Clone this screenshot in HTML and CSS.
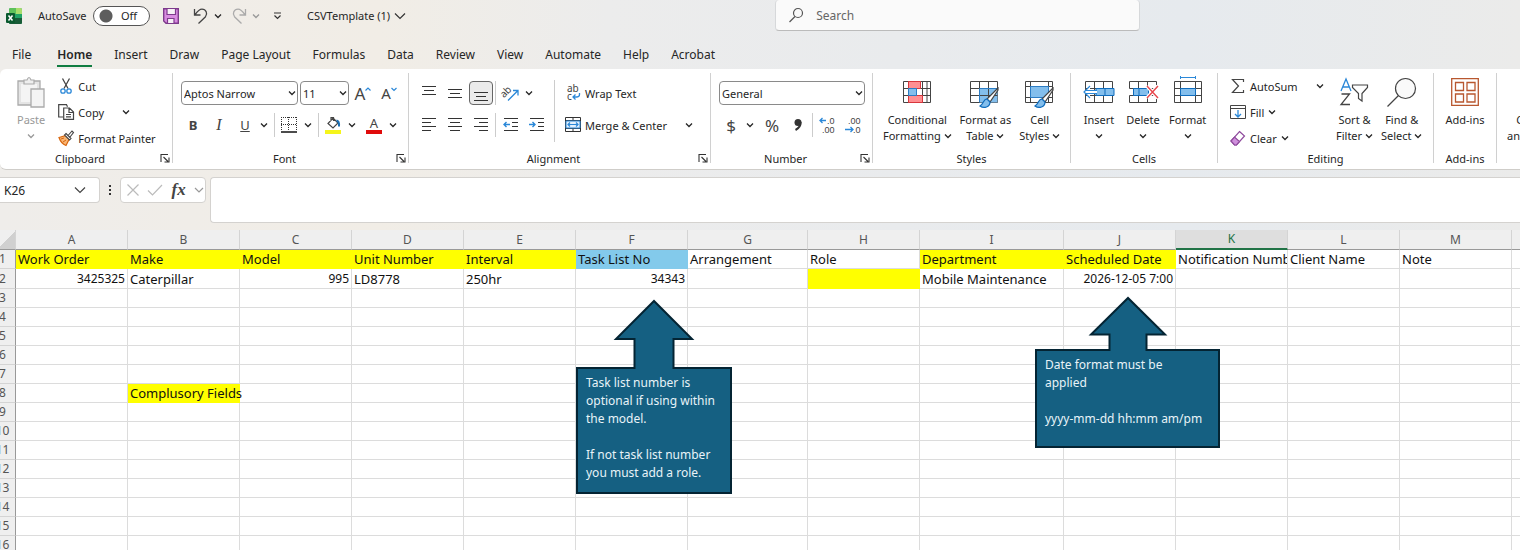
FILE: index.html
```
<!DOCTYPE html>
<html lang="en">
<head>
    <meta charset="UTF-8">
    <meta name="viewport" content="width=device-width, initial-scale=1.0">
    <title>CSVTemplate (1)</title>
    <link rel="stylesheet" href="styles.css">
</head>
<body>
    <svg class="defs" aria-hidden="true">
        <symbol id="chev" viewBox="0 0 8 8"><path d="M1 2.5l3 3 3-3" fill="none" stroke="currentColor" stroke-width="1.3"/></symbol>
        <symbol id="launch" viewBox="0 0 10 10"><path d="M1 9V1.500h7M3.500 4l4.500 4.500M9 4.500v4.500H4.500" fill="none" stroke="#333" stroke-width="1.100"/></symbol>
        <symbol id="brush" viewBox="0 0 20 22"><path d="M19 1L8 12l3 3L19 3z" fill="#fff" stroke="#444" stroke-width="1.200"/><path d="M8 12c-4 0-3 5-7 7 4 3 10 1 10-4z" fill="#83beec" stroke="#0f6cbd" stroke-width="1.200"/></symbol>
    </svg>

    <header class="titlebar">
        <div class="quick">
            <svg class="logo" viewBox="0 0 16 16"><rect x="3" width="13" height="16" rx="1.500" fill="#21a366"/><path d="M3 1.500Q3 0 4.500 0H10v6H3z" fill="#5dc15a"/><path d="M10 0h4.500Q16 0 16 1.500V6h-6z" fill="#a8dd6b"/><path d="M3 10h13v4.500q0 1.500-1.500 1.500h-10Q3 16 3 14.500z" fill="#185c37"/><rect y="5" width="9" height="10" rx="1" fill="#0b5a2f"/><path d="M2.500 7.500l4 5m0-5l-4 5" stroke="#fff" stroke-width="1.500"/></svg>
            <label class="autosave" for="autosave">AutoSave</label>
            <span class="switch"><input type="checkbox" id="autosave"><span>Off</span></span>
            <button class="save" aria-label="Save"><svg width="16" height="16" viewBox="0 0 16 16"><path d="M.700.700h14.600v14.600H3L.700 13z" fill="#d88be0" stroke="#7d3a8c" stroke-width="1.400"/><path d="M4 1v5.500h8.500V1M4.500 15v-4.500H11V15" fill="#f6f0f6" stroke="#7d3a8c" stroke-width="1.200"/></svg></button>
            <button class="undo" aria-label="Undo"><svg width="16" height="18" viewBox="0 0 16 18"><path d="M1.500 2v6h6M1.800 8C4 5 6 2.200 9 2.200c4 0 6 4.500 3.500 7.500L5.500 16.500" fill="none" stroke="#444" stroke-width="1.300"/></svg></button>
            <button class="drop" aria-label="Undo list"><svg><use href="#chev"/></svg></button>
            <button class="redo" aria-label="Redo"><svg width="16" height="18" viewBox="0 0 16 18"><path d="M14.500 2v6h-6M14.200 8C12 5 10 2.200 7 2.200c-4 0-6 4.500-3.500 7.500l7 6.800" fill="none" stroke="#aaa" stroke-width="1.300"/></svg></button>
            <button class="drop faded" aria-label="Redo list"><svg><use href="#chev"/></svg></button>
            <button class="customize" aria-label="Customize toolbar"><svg width="9" height="8" viewBox="0 0 9 8"><path d="M1 1h7M1.500 3.500l3 3 3-3" fill="none" stroke="#333" stroke-width="1.200"/></svg></button>
            <button class="filename">CSVTemplate (1) <svg width="12" height="8" viewBox="0 0 12 8"><path d="M1 1.500l5 5 5-5" fill="none" stroke="#333" stroke-width="1.200"/></svg></button>
        </div>
        <div class="search">
            <svg width="16" height="16" viewBox="0 0 16 16"><circle cx="10" cy="6" r="4.500" fill="none" stroke="#555" stroke-width="1.200"/><path d="M7 9.500L1.500 15" stroke="#555" stroke-width="1.200"/></svg>
            <input type="search" placeholder="Search" aria-label="Search">
        </div>
    </header>

    <nav class="tabs">
        <a href="#">File</a>
        <a href="#" class="active">Home</a>
        <a href="#">Insert</a>
        <a href="#">Draw</a>
        <a href="#">Page Layout</a>
        <a href="#">Formulas</a>
        <a href="#">Data</a>
        <a href="#">Review</a>
        <a href="#">View</a>
        <a href="#">Automate</a>
        <a href="#">Help</a>
        <a href="#">Acrobat</a>
    </nav>

    <div class="ribbon">
        <section class="group clipboard">
            <div class="body">
                <button class="big faded"><svg width="28" height="32" viewBox="0 0 28 32"><path d="M1 5h22v24H1z" fill="#e4e4e4" stroke="#aaa" stroke-width="1.300"/><path d="M4 8h16v18H4z" fill="#f4f4f4"/><path d="M7 8V4h3q2-5 4 0h3v4z" fill="#eee" stroke="#aaa" stroke-width="1.200"/><path d="M14 13h13v18H14z" fill="#f4f4f4" stroke="#aaa" stroke-width="1.300"/></svg><span>Paste</span><svg class="chev"><use href="#chev"/></svg></button>
                <div class="list">
                    <button><svg width="16" height="16" viewBox="0 0 16 16"><path d="M4.500 0.500l5.500 10M11.500 0.500L6 10.500" stroke="#444" stroke-width="1.300"/><circle cx="5" cy="13" r="2.200" fill="none" stroke="#2b88d8" stroke-width="1.300"/><circle cx="11" cy="13" r="2.200" fill="none" stroke="#2b88d8" stroke-width="1.300"/></svg>Cut</button>
                    <button><svg width="16" height="16" viewBox="0 0 16 16"><path d="M5 13H.700V.700h7.800l1 2M5.700 4h5.800l4 4v7.300H5.700zM11 4v4.500h4.500M8 10.500h5M8 12.800h5" fill="none" stroke="#444" stroke-width="1.200"/></svg>Copy<svg class="chev far"><use href="#chev"/></svg></button>
                    <button><svg width="16" height="16" viewBox="0 0 16 16"><path d="M1 7.500l7-2 3 4-3 6q-5-2-7-8z" fill="#f9b573" stroke="#d8660e" stroke-width="1.200"/><path d="M3 9l3-1M5 12l3-2" stroke="#d8660e"/><path d="M8 3.500l5 5-1.500 1.500-5-5zM10.500 5l3.500-4 1.500 1.500L12 7" fill="#fff" stroke="#444" stroke-width="1.100"/></svg>Format Painter</button>
                </div>
            </div>
            <footer><span>Clipboard</span><button class="launch" aria-label="Clipboard settings"><svg><use href="#launch"/></svg></button></footer>
        </section>

        <section class="group font">
            <div class="body rows">
                <div class="row">
                    <span class="select name"><select aria-label="Font"><option>Aptos Narrow</option></select><svg class="chev"><use href="#chev"/></svg></span>
                    <span class="select size"><select aria-label="Font size"><option>11</option></select><svg class="chev"><use href="#chev"/></svg></span>
                    <button class="tool grow" aria-label="Increase font size">A<svg width="6" height="12" viewBox="0 0 6 12"><path d="M.500 3.500L3 1l2.500 2.500" fill="none" stroke="#2b88d8" stroke-width="1.200"/></svg></button>
                    <button class="tool shrink" aria-label="Decrease font size">A<svg width="6" height="12" viewBox="0 0 6 12"><path d="M.500 1L3 3.500 5.500 1" fill="none" stroke="#2b88d8" stroke-width="1.200"/></svg></button>
                </div>
                <div class="row">
                    <button class="tool"><b>B</b></button>
                    <button class="tool italic">I</button>
                    <button class="tool"><u>U</u></button>
                    <button class="drop" aria-label="Underline style"><svg><use href="#chev"/></svg></button>
                    <i class="sep"></i>
                    <button class="tool" aria-label="Borders"><svg width="16" height="16" viewBox="0 0 16 16"><path d="M0 .500h16M0 7.500h16M.500 0v14M7.500 0v14M15.500 0v14" stroke="#333" stroke-dasharray="1 1"/><path d="M0 15h16" stroke="#111" stroke-width="1.500"/></svg></button>
                    <button class="drop" aria-label="Border list"><svg><use href="#chev"/></svg></button>
                    <i class="sep"></i>
                    <button class="tool" aria-label="Fill color"><svg width="16" height="18" viewBox="0 0 16 18"><path d="M8 2l5 5-5 5-5-4.500zM6 5V1.500h2.500V5" fill="#fff" stroke="#444" stroke-width="1.200"/><path d="M11.500 4.500q3 .500 2.500 6" fill="none" stroke="#1b6fb5" stroke-width="2"/><path d="M0 14h16v4H0z" fill="#f5f51b"/></svg></button>
                    <button class="drop" aria-label="Fill colors"><svg><use href="#chev"/></svg></button>
                    <button class="tool color" aria-label="Font color"><span>A</span></button>
                    <button class="drop" aria-label="Font colors"><svg><use href="#chev"/></svg></button>
                </div>
            </div>
            <footer><span>Font</span><button class="launch" aria-label="Font settings"><svg><use href="#launch"/></svg></button></footer>
        </section>

        <section class="group alignment">
            <div class="body">
                <div class="rows">
                    <div class="row">
                        <button class="tool" aria-label="Top align"><svg width="14" height="16" viewBox="0 0 14 16"><path d="M0 1.500h14M2 5.500h10M0 9.500h14" stroke="#333"/></svg></button>
                        <button class="tool" aria-label="Middle align"><svg width="14" height="16" viewBox="0 0 14 16"><path d="M0 4.500h14M2 8.500h10M0 12.500h14" stroke="#333"/></svg></button>
                        <button class="tool pressed" aria-label="Bottom align"><svg width="14" height="16" viewBox="0 0 14 16"><path d="M0 7.500h14M2 11.500h10M0 15.500h14" stroke="#333"/></svg></button>
                        <i class="sep"></i>
                        <button class="tool" aria-label="Orientation"><svg width="18" height="18" viewBox="0 0 18 18"><text x="-1" y="11" transform="rotate(-45 5 8)" class="ab">ab</text><path d="M7 16.500L17 6.500M12 6.500h5v5" fill="none" stroke="#2b88d8" stroke-width="1.300"/></svg></button>
                        <button class="drop" aria-label="Orientation list"><svg><use href="#chev"/></svg></button>
                    </div>
                    <div class="row">
                        <button class="tool" aria-label="Align left"><svg width="14" height="14" viewBox="0 0 14 14"><path d="M0 .500h14M0 4.500h9M0 8.500h14M0 12.500h9" stroke="#333"/></svg></button>
                        <button class="tool" aria-label="Center"><svg width="14" height="14" viewBox="0 0 14 14"><path d="M0 .500h14M2 4.500h10M0 8.500h14M2 12.500h10" stroke="#333"/></svg></button>
                        <button class="tool" aria-label="Align right"><svg width="14" height="14" viewBox="0 0 14 14"><path d="M0 .500h14M5 4.500h9M0 8.500h14M5 12.500h9" stroke="#333"/></svg></button>
                        <i class="sep"></i>
                        <button class="tool" aria-label="Decrease indent"><svg width="15" height="14" viewBox="0 0 15 14"><path d="M1 .500h14M9 4.500h6M9 8.500h6M1 12.500h14" stroke="#333"/><path d="M7 6.500H1M3.500 4L1 6.500 3.500 9" fill="none" stroke="#2b88d8" stroke-width="1.400"/></svg></button>
                        <button class="tool" aria-label="Increase indent"><svg width="15" height="14" viewBox="0 0 15 14"><path d="M1 .500h14M9 4.500h6M9 8.500h6M1 12.500h14" stroke="#333"/><path d="M0 6.500h6M3.500 4L6 6.500 3.500 9" fill="none" stroke="#2b88d8" stroke-width="1.400"/></svg></button>
                    </div>
                </div>
                <div class="rows wrap">
                    <button class="row"><svg width="16" height="16" viewBox="0 0 16 16"><text x="2" y="7" class="ab">ab</text><text x="2" y="15" class="ab">c</text><path d="M14.500 8v1.500q0 2.500-3 2.500H8M10.500 9.500L8 12l2.500 2.500" fill="none" stroke="#2b88d8" stroke-width="1.300"/></svg>Wrap Text</button>
                    <button class="row"><svg width="16" height="16" viewBox="0 0 16 16"><path d="M.500.500h15v14H.500zM.500 3.500h15M.500 11.500h15M8 .500v3M8 11.500v3" fill="#fff" stroke="#333"/><path d="M1 4h14v7H1z" fill="#e3f0fb" stroke="#2b88d8"/><path d="M3 7.500h10M5 5.500l-2 2 2 2M11 5.500l2 2-2 2" fill="none" stroke="#2b88d8" stroke-width="1.200"/></svg>Merge &amp; Center<svg class="chev far"><use href="#chev"/></svg></button>
                </div>
            </div>
            <footer><span>Alignment</span><button class="launch" aria-label="Alignment settings"><svg><use href="#launch"/></svg></button></footer>
        </section>

        <section class="group number">
            <div class="body rows">
                <div class="row">
                    <span class="select format"><select aria-label="Number format"><option>General</option></select><svg class="chev"><use href="#chev"/></svg></span>
                </div>
                <div class="row">
                    <button class="tool sign">$</button>
                    <button class="drop" aria-label="Currency list"><svg><use href="#chev"/></svg></button>
                    <button class="tool sign">%</button>
                    <button class="tool" aria-label="Comma style"><svg width="8" height="14" viewBox="0 0 8 14"><circle cx="4" cy="4.500" r="3.500" fill="#333"/><path d="M6.500 4q.500 5-5 8" fill="none" stroke="#333" stroke-width="2"/></svg></button>
                    <i class="sep"></i>
                    <button class="tool" aria-label="Increase decimal"><svg width="16" height="18" viewBox="0 0 16 18"><text x="8" y="8" class="dec">.0</text><text x="3" y="17" class="dec">.00</text><path d="M7 4.500H1M3.500 2L1 4.500 3.500 7" fill="none" stroke="#2b88d8" stroke-width="1.300"/></svg></button>
                    <button class="tool" aria-label="Decrease decimal"><svg width="16" height="18" viewBox="0 0 16 18"><text x="3" y="8" class="dec">.00</text><text x="8" y="17" class="dec">.0</text><path d="M0 13.500h8M5.500 11L8 13.500 5.500 16" fill="none" stroke="#2b88d8" stroke-width="1.300"/></svg></button>
                </div>
            </div>
            <footer><span>Number</span><button class="launch" aria-label="Number settings"><svg><use href="#launch"/></svg></button></footer>
        </section>

        <section class="group styles">
            <div class="body">
                <button class="big"><svg width="28" height="32" viewBox="0 0 28 32"><path d="M.500 5.500h27v21H.500zM.500 12.500h27M.500 19.500h27M5.500 5.500v21M19.500 5.500v21M24 5.500v21" fill="#fff" stroke="#444"/><path d="M5.500 5.500h12v7h-12zM5.500 19.500h14v7h-14z" fill="#ff8f92" stroke="#d8363c"/><path d="M5.500 12.500h8v7h-8z" fill="#83beec" stroke="#2b7cc4"/></svg><span>Conditional<br>Formatting <svg class="chev"><use href="#chev"/></svg></span></button>
                <button class="big"><svg width="32" height="32" viewBox="0 0 32 32"><path d="M1.500 5.500h27v21h-27z" fill="#fff" stroke="#444"/><path d="M10.500 12.500h18v14h-18z" fill="#83beec"/><path d="M1.500 12.500h27M1.500 19.500h27M10.500 5.500v21M19.500 5.500v21" stroke="#444"/><path d="M10.500 26.500v-14h18" fill="none" stroke="#2b7cc4"/><use href="#brush" x="9" y="11" width="22" height="22"/></svg><span>Format as<br>Table <svg class="chev"><use href="#chev"/></svg></span></button>
                <button class="big"><svg width="32" height="32" viewBox="0 0 32 32"><path d="M1.500 5.500h27v21h-27zM1.500 10.500h27M1.500 21.500h27M6.500 5.500v21M24.500 5.500v21" fill="#fff" stroke="#444"/><path d="M6.500 10.500h18v11h-18z" fill="#83beec" stroke="#2b7cc4"/><use href="#brush" x="9" y="11" width="22" height="22"/></svg><span>Cell<br>Styles <svg class="chev"><use href="#chev"/></svg></span></button>
            </div>
            <footer><span>Styles</span></footer>
        </section>

        <section class="group cells">
            <div class="body">
                <button class="big"><svg width="32" height="32" viewBox="0 0 32 32"><path d="M2.500 5.500h27v21h-27zM11.500 5.500v21M20.500 5.500v21M2.500 12.500h27M2.500 19.500h27" fill="#fff" stroke="#444"/><path d="M13 12.500h18v7H13z" fill="#83beec" stroke="#0f6cbd"/><path d="M22 12.500v7" stroke="#0f6cbd"/><path d="M7 9.500l-6 6.500 6 6.500v-4.500h7v-4H7z" fill="#fff"/><path d="M7 10l-6 6 6 6M2 14.500h12M2 17.500h12" fill="none" stroke="#2b88d8" stroke-width="1.200"/></svg><span>Insert</span><svg class="chev"><use href="#chev"/></svg></button>
                <button class="big"><svg width="32" height="32" viewBox="0 0 32 32"><path d="M2.500 5.500h27v7h-27zM2.500 19.500h27v7h-27zM11.500 5.500v7M20.500 5.500v7M11.500 19.500v7M20.500 19.500v7" fill="#fff" stroke="#444"/><path d="M6.500 12.500h15v7h-15z" fill="#83beec" stroke="#0f6cbd"/><path d="M12 12.500v7" stroke="#0f6cbd"/><path d="M20 10l11 12M31 10L20 22" stroke="#fff" stroke-width="4"/><path d="M20 10l11 12M31 10L20 22" stroke="#e8474c" stroke-width="1.400"/></svg><span>Delete</span><svg class="chev"><use href="#chev"/></svg></button>
                <button class="big"><svg width="32" height="32" viewBox="0 0 32 32"><path d="M8.500 1.500h15M8.500 0v3M23.500 0v3" stroke="#2b88d8"/><path d="M2.500 5.500h27v21h-27zM8.500 5.500v21M23.500 5.500v21M2.500 12.500h27M2.500 19.500h27" fill="#fff" stroke="#444"/><path d="M8.500 12.500h15v7h-15z" fill="#83beec" stroke="#0f6cbd"/></svg><span>Format</span><svg class="chev"><use href="#chev"/></svg></button>
            </div>
            <footer><span>Cells</span></footer>
        </section>

        <section class="group editing">
            <div class="body">
                <div class="list">
                    <button><svg width="16" height="16" viewBox="0 0 16 16"><path d="M13.500 4V1.500h-11L8.500 8l-6 6.500h11V12" fill="none" stroke="#444" stroke-width="1.200"/></svg>AutoSum<svg class="chev far"><use href="#chev"/></svg></button>
                    <button><svg width="16" height="16" viewBox="0 0 16 16"><path d="M.500 1.500h15v13H.500zM.500 4.500h15" fill="#fff" stroke="#444"/><path d="M8 6v7M5 10l3 3 3-3" fill="none" stroke="#2b88d8" stroke-width="1.300"/></svg>Fill <svg class="chev"><use href="#chev"/></svg></button>
                    <button><svg width="16" height="16" viewBox="0 0 16 16"><path d="M9.500 1.500l5 4.500-8 9h-2L1 11z" fill="#fff" stroke="#8f4b9d" stroke-width="1.200"/><path d="M1 11l3.500-4 5 4.500-3 3.500h-2z" fill="#cf8fdc" stroke="#8f4b9d" stroke-width="1.200"/></svg>Clear <svg class="chev"><use href="#chev"/></svg></button>
                </div>
                <button class="big"><svg width="30" height="32" viewBox="0 0 30 32"><path d="M2 15l5-12 5 12M3.500 11h7" fill="none" stroke="#2b88d8" stroke-width="1.300"/><path d="M2.500 18h8L2 28.500h9" fill="none" stroke="#444" stroke-width="1.300"/><path d="M13.500 9h15v2.500l-5.500 6V25l-3.500-2.500v-5l-6-6z" fill="#fff" stroke="#444" stroke-width="1.200"/></svg><span>Sort &amp;<br>Filter <svg class="chev"><use href="#chev"/></svg></span></button>
                <button class="big"><svg width="32" height="32" viewBox="0 0 32 32"><circle cx="19.500" cy="12.500" r="10" fill="#fafafa" stroke="#444" stroke-width="1.200"/><path d="M12.500 19.500L1.500 30.500" stroke="#444" stroke-width="1.300"/></svg><span>Find &amp;<br>Select <svg class="chev"><use href="#chev"/></svg></span></button>
            </div>
            <footer><span>Editing</span></footer>
        </section>

        <section class="group addins">
            <div class="body">
                <button class="big"><svg width="28" height="32" viewBox="0 0 28 32"><path d="M.700 2.700h26.600v26.600H.700z" fill="#fff" stroke="#b8572f" stroke-width="1.300"/><path d="M4.500 6.500h8v8h-8zM16 6.500h8v8h-8zM4.500 18h8v8h-8zM16 18h8v8h-8z" fill="none" stroke="#b8572f" stroke-width="1.300"/></svg><span>Add-ins</span></button>
            </div>
            <footer><span>Add-ins</span></footer>
        </section>

        <section class="group pdf">
            <div class="body">
                <button class="big"><svg width="28" height="32"></svg><span>Create<br>and Share</span></button>
            </div>
        </section>
    </div>

    <div class="formulabar">
        <div class="namebox"><input type="text" value="K26" aria-label="Name box"><button aria-label="Names"><svg width="12" height="8" viewBox="0 0 12 8"><path d="M1 1.500l5 5 5-5" fill="none" stroke="#444" stroke-width="1.200"/></svg></button></div>
        <svg class="dots" width="4" height="12" viewBox="0 0 4 12"><path d="M1 1h2v2H1zM1 5h2v2H1zM1 9h2v2H1z" fill="#333"/></svg>
        <div class="fx">
            <button aria-label="Cancel"><svg width="12" height="12" viewBox="0 0 12 12"><path d="M.500.500l11 11M11.500.500l-11 11" stroke="#bbb" stroke-width="1.200"/></svg></button>
            <button aria-label="Enter"><svg width="16" height="12" viewBox="0 0 16 12"><path d="M1 6.500l4.500 4.500L15 1" fill="none" stroke="#bbb" stroke-width="1.200"/></svg></button>
            <button class="fn">fx</button>
            <button aria-label="Functions"><svg width="10" height="8" viewBox="0 0 10 8"><path d="M1 2l4 4 4-4" fill="none" stroke="#999" stroke-width="1.200"/></svg></button>
        </div>
        <textarea class="formula" aria-label="Formula"></textarea>
    </div>

    <main class="sheet">
        <table>
            <colgroup>
                <col class="head"><col><col><col><col><col><col><col class="g"><col><col class="i"><col><col><col><col><col class="rest">
            </colgroup>
            <thead>
                <tr><th class="corner"></th><th>A</th><th>B</th><th>C</th><th>D</th><th>E</th><th>F</th><th>G</th><th>H</th><th>I</th><th>J</th><th class="current">K</th><th>L</th><th>M</th><th></th></tr>
            </thead>
            <tbody>
                <tr><th>1</th><td class="must">Work Order</td><td class="must">Make</td><td class="must">Model</td><td class="must">Unit Number</td><td class="must">Interval</td><td class="optional">Task List No</td><td>Arrangement</td><td>Role</td><td class="must">Department</td><td class="must">Scheduled Date</td><td class="clip">Notification Number</td><td>Client Name</td><td>Note</td><td></td></tr>
                <tr class="tall"><th>2</th><td class="num">3425325</td><td>Caterpillar</td><td class="num">995</td><td>LD8778</td><td>250hr</td><td class="num">34343</td><td></td><td class="must"></td><td>Mobile Maintenance</td><td class="num">2026-12-05 7:00</td><td></td><td></td><td></td><td></td></tr>
                <tr><th>3</th><td></td><td></td><td></td><td></td><td></td><td></td><td></td><td></td><td></td><td></td><td></td><td></td><td></td><td></td></tr>
                <tr><th>4</th><td></td><td></td><td></td><td></td><td></td><td></td><td></td><td></td><td></td><td></td><td></td><td></td><td></td><td></td></tr>
                <tr><th>5</th><td></td><td></td><td></td><td></td><td></td><td></td><td></td><td></td><td></td><td></td><td></td><td></td><td></td><td></td></tr>
                <tr><th>6</th><td></td><td></td><td></td><td></td><td></td><td></td><td></td><td></td><td></td><td></td><td></td><td></td><td></td><td></td></tr>
                <tr><th>7</th><td></td><td></td><td></td><td></td><td></td><td></td><td></td><td></td><td></td><td></td><td></td><td></td><td></td><td></td></tr>
                <tr><th>8</th><td></td><td class="must">Complusory Fields</td><td></td><td></td><td></td><td></td><td></td><td></td><td></td><td></td><td></td><td></td><td></td><td></td></tr>
                <tr><th>9</th><td></td><td></td><td></td><td></td><td></td><td></td><td></td><td></td><td></td><td></td><td></td><td></td><td></td><td></td></tr>
                <tr><th>10</th><td></td><td></td><td></td><td></td><td></td><td></td><td></td><td></td><td></td><td></td><td></td><td></td><td></td><td></td></tr>
                <tr><th>11</th><td></td><td></td><td></td><td></td><td></td><td></td><td></td><td></td><td></td><td></td><td></td><td></td><td></td><td></td></tr>
                <tr><th>12</th><td></td><td></td><td></td><td></td><td></td><td></td><td></td><td></td><td></td><td></td><td></td><td></td><td></td><td></td></tr>
                <tr><th>13</th><td></td><td></td><td></td><td></td><td></td><td></td><td></td><td></td><td></td><td></td><td></td><td></td><td></td><td></td></tr>
                <tr><th>14</th><td></td><td></td><td></td><td></td><td></td><td></td><td></td><td></td><td></td><td></td><td></td><td></td><td></td><td></td></tr>
                <tr><th>15</th><td></td><td></td><td></td><td></td><td></td><td></td><td></td><td></td><td></td><td></td><td></td><td></td><td></td><td></td></tr>
                <tr><th>16</th><td></td><td></td><td></td><td></td><td></td><td></td><td></td><td></td><td></td><td></td><td></td><td></td><td></td><td></td></tr>
            </tbody>
        </table>

        <div class="callout task">
            <svg width="82" height="70" viewBox="0 0 82 70"><path d="M21.500 70V40H3L41 2l38 38H60.500v30" fill="#156082" stroke="#042433" stroke-width="2"/></svg>
            <p>Task list number is<br>optional if using within<br>the model.<br><br>If not task list number<br>you must add a role.</p>
        </div>
        <div class="callout date">
            <svg width="82" height="55" viewBox="0 0 82 55"><path d="M22.500 55V38.500H4L41 2l37 36.500H59.500V55" fill="#156082" stroke="#042433" stroke-width="2"/></svg>
            <p>Date format must be<br>applied<br><br>yyyy-mm-dd hh:mm am/pm</p>
        </div>
    </main>
</body>
</html>
```
FILE: styles.css
```
* {
    box-sizing: border-box;
}
body {
    margin: 0;
    font-family: "Noto Sans", "Open Sans", sans-serif;
    font-size: 12px;
    color: #262626;
    background: linear-gradient(90deg, #efedea 0%, #f1ede6 25%, #ececec 40%, #e6eaee 78%, #ebebea 100%);
    height: 100vh;
    overflow: hidden;
    display: flex;
    flex-direction: column;
}
button, input, select, textarea {
    font: inherit;
    color: inherit;
    background: none;
    border: none;
    padding: 0;
    margin: 0;
}
button {
    display: flex;
    align-items: center;
    justify-content: center;
    white-space: nowrap;
}
svg {
    flex: none;
    overflow: visible;
}
.defs {
    position: absolute;
    width: 0;
    height: 0;
}
.chev, .drop svg {
    width: 8px;
    height: 8px;
}
.faded {
    color: #999;
}

/* title bar */
.titlebar {
    display: grid;
    grid-template-columns: 51fr 24fr 25fr;
    height: 31px;
}
.quick {
    display: flex;
    align-items: center;
    padding-left: 6px;
}
.logo {
    width: 16px;
    height: 16px;
}
.autosave {
    margin-left: 16px;
    width: 55px;
    white-space: nowrap;
    font-size: 11px;
}
.switch {
    position: relative;
    width: 57px;
    height: 20px;
}
.switch input {
    appearance: none;
    width: 100%;
    height: 100%;
    border: 1px solid #555;
    border-radius: 10px;
    background: #fff radial-gradient(circle at 12px 9px, #5d5d5d 6px, transparent 7px);
}
.switch span {
    position: absolute;
    left: 28px;
    top: 2px;
    font-size: 11px;
    line-height: 16px;
}
.save {
    margin: 0 14px 0 13px;
}
.quick .drop {
    margin: 0 9px 0 4px;
}
.customize {
    margin: 0 25px 0 4px;
}
.filename {
    gap: 4px;
    font-size: 11px;
}
.search {
    display: flex;
    align-items: center;
    gap: 12px;
    padding-left: 12px;
    background: #fafafa;
    border: 1px solid #d6d8da;
    border-top: none;
    border-bottom-color: #bbb;
    border-radius: 4px;
}
.search input {
    flex: 1;
    outline: none;
}
.search input::placeholder {
    color: #666;
}

/* tabs */
.tabs {
    display: flex;
    gap: 22px;
    height: 38px;
    padding: 16px 0 0 12px;
}
.tabs a {
    height: 20px;
    line-height: 16px;
    color: #262626;
    text-decoration: none;
    white-space: nowrap;
}
.tabs a:first-child {
    margin-right: 4px;
}
.tabs .active {
    font-weight: 600;
    border-bottom: 2px solid #107c41;
}

/* ribbon */
.ribbon {
    display: flex;
    flex: none;
    padding: 4px 0 6px;
    font-size: 11px;
    background: #fff;
    border-bottom: 1px solid #cfcdc9;
    border-radius: 6px 0 0 6px;
    overflow: hidden;
}
.group {
    flex: none;
    border-right: 1px solid #d0d0d0;
}
.body {
    display: flex;
    height: 80px;
}
.group footer {
    display: flex;
    align-items: center;
    height: 10px;
}
.group footer span {
    flex: 1;
    text-align: center;
}
.launch {
    margin-right: 2px;
}
.launch svg {
    width: 10px;
    height: 10px;
}
.clipboard {
    width: 173px;
}
.clipboard .body {
    padding-left: 13px;
}
.font {
    width: 236px;
}
.alignment {
    width: 302px;
}
.number {
    width: 162px;
}
.styles {
    width: 198px;
}
.cells {
    width: 147px;
}
.editing {
    width: 216px;
}
.addins {
    width: 63px;
}
.addins .body {
    justify-content: center;
}
.pdf {
    padding-left: 6px;
    border: none;
}
.font .body, .alignment .body, .number .body {
    padding-left: 8px;
}
.styles .body, .cells .body {
    padding-left: 6px;
}
.editing .body {
    padding-left: 12px;
}
.rows {
    display: flex;
    flex-direction: column;
    gap: 8px;
    padding-top: 8px;
}
.row {
    display: flex;
    align-items: center;
    gap: 2px;
    height: 24px;
}
.tool {
    width: 24px;
    height: 24px;
    font-size: 13px;
    color: #444;
}
.drop {
    width: 9px;
    margin-right: 4px;
}
.sep {
    width: 1px;
    height: 24px;
    background: #ccc;
}
.italic {
    font-family: "Liberation Serif", serif;
    font-style: italic;
    font-size: 16px;
}
.grow {
    font-size: 17px;
}
.shrink {
    font-size: 15px;
}
.color span {
    width: 16px;
    height: 18px;
    line-height: 14px;
    border-bottom: 4px solid #e00b0b;
}
.sign {
    font-size: 17px;
}
.pressed {
    background: #ebebeb;
    border: 1px solid #666;
    border-radius: 4px;
}
.ab, .dec {
    font-size: 10px;
    fill: #444;
}
.dec {
    font-family: "Liberation Sans", sans-serif;
    font-size: 9px;
}
.select {
    position: relative;
    display: flex;
    align-items: center;
}
.select select {
    appearance: none;
    width: 100%;
    height: 24px;
    padding-left: 2px;
    border: 1px solid #8a8a8a;
    border-radius: 4px;
    background: #fff;
}
.select .chev {
    position: absolute;
    right: 2px;
    pointer-events: none;
}
.name {
    width: 117px;
}
.size {
    width: 49px;
}
.format {
    width: 146px;
}
.big {
    flex-direction: column;
    justify-content: flex-start;
    align-self: flex-start;
    gap: 4px;
    min-width: 44px;
    padding: 3px 4px 0;
    line-height: 16px;
}
.big.faded {
    min-width: 36px;
}
.list {
    display: flex;
    flex-direction: column;
}
.list button {
    height: 26px;
    gap: 4px;
    justify-content: flex-start;
}
.clipboard .list {
    margin-left: 9px;
}
.editing .list {
    width: 102px;
}
.list .far {
    margin-left: 14px;
}
.wrap {
    margin: 7px 0 11px 6px;
    padding: 1px 0 0 10px;
    border-left: 1px solid #ccc;
}
.wrap .row {
    gap: 4px;
    justify-content: flex-start;
}
.wrap .far {
    margin-left: 14px;
}

/* formula bar */
.formulabar {
    display: flex;
    flex: none;
    align-items: flex-start;
    height: 60px;
    padding-top: 7px;
}
.namebox, .fx, .formula {
    background: #fff;
    border: 1px solid #d4d2cf;
    border-radius: 4px;
}
.namebox, .fx {
    display: flex;
    align-items: center;
    height: 26px;
}
.namebox {
    width: 100px;
    padding-left: 4px;
    border-left: none;
    border-radius: 0 4px 4px 0;
}
.namebox input {
    width: 70px;
}
.dots {
    margin: 7px 8px;
}
.fx {
    width: 86px;
    padding: 0 1px 0 6px;
    justify-content: space-between;
}
.fn {
    font-family: "Liberation Serif", serif;
    font-style: italic;
    font-weight: bold;
    font-size: 17px;
    color: #444;
}
.formula {
    flex: 1;
    height: 46px;
    margin-left: 4px;
    border-right: none;
    border-radius: 4px 0 0 4px;
    resize: none;
}

/* sheet, the row numbers run off the left edge */
.sheet {
    position: relative;
    flex: 1;
    overflow: hidden;
    background: #fff;
}
table {
    table-layout: fixed;
    width: calc(100% + 10px);
    margin-left: -10px;
    border-collapse: separate;
    border-spacing: 0;
    font-size: 13px;
    color: #111;
}
col {
    width: 112px;
}
.head {
    width: 26px;
}
.g {
    width: 120px;
}
.i {
    width: 144px;
}
.rest {
    width: auto;
}
th {
    height: 19px;
    padding: 0;
    font-size: 12px;
    font-weight: normal;
    line-height: 16px;
    color: #555;
    background: #efefef;
    border-right: 1px solid #d4d4d4;
    border-bottom: 1px solid #d4d4d4;
}
thead th {
    height: 20px;
    border-bottom-color: #999;
}
tbody th {
    border-right-color: #999;
}
.corner {
    background: linear-gradient(135deg, transparent 60%, #d0d0d0 60%);
    background-color: #efefef;
}
.current {
    color: #217346;
    background: #dedede;
    border-bottom: 2px solid #217346;
}
td {
    height: 19px;
    padding: 0 2px;
    line-height: 18px;
    white-space: nowrap;
    border-right: 1px solid #dcdcdc;
    border-bottom: 1px solid #dcdcdc;
}
td:last-child, th:last-child {
    border-right: none;
}
tbody th:first-child {
    border-right: 1px solid #999;
}
.tall th, .tall td {
    height: 20px;
}
.num {
    text-align: right;
    font-size: 12px;
}
.clip {
    overflow: hidden;
}
.must {
    background: #ff0;
    border-color: #ff0;
}
.optional {
    background: #83caeb;
    border-color: #83caeb;
}

/* callouts */
.callout {
    position: absolute;
    display: flex;
    flex-direction: column;
    align-items: center;
}
.callout svg {
    position: relative;
    z-index: 1;
    margin-bottom: -2px;
}
.callout p {
    width: 100%;
    margin: 0;
    padding: 5px 8px;
    line-height: 18px;
    white-space: nowrap;
    color: #e8f3f8;
    background: #156082;
    border: 2px solid #042433;
}
.task {
    left: 576px;
    top: 69px;
    width: 156px;
}
.task p {
    padding-bottom: 10px;
}
.date {
    left: 1035px;
    top: 66px;
    width: 185px;
}
.date p {
    padding-bottom: 18px;
}
```
